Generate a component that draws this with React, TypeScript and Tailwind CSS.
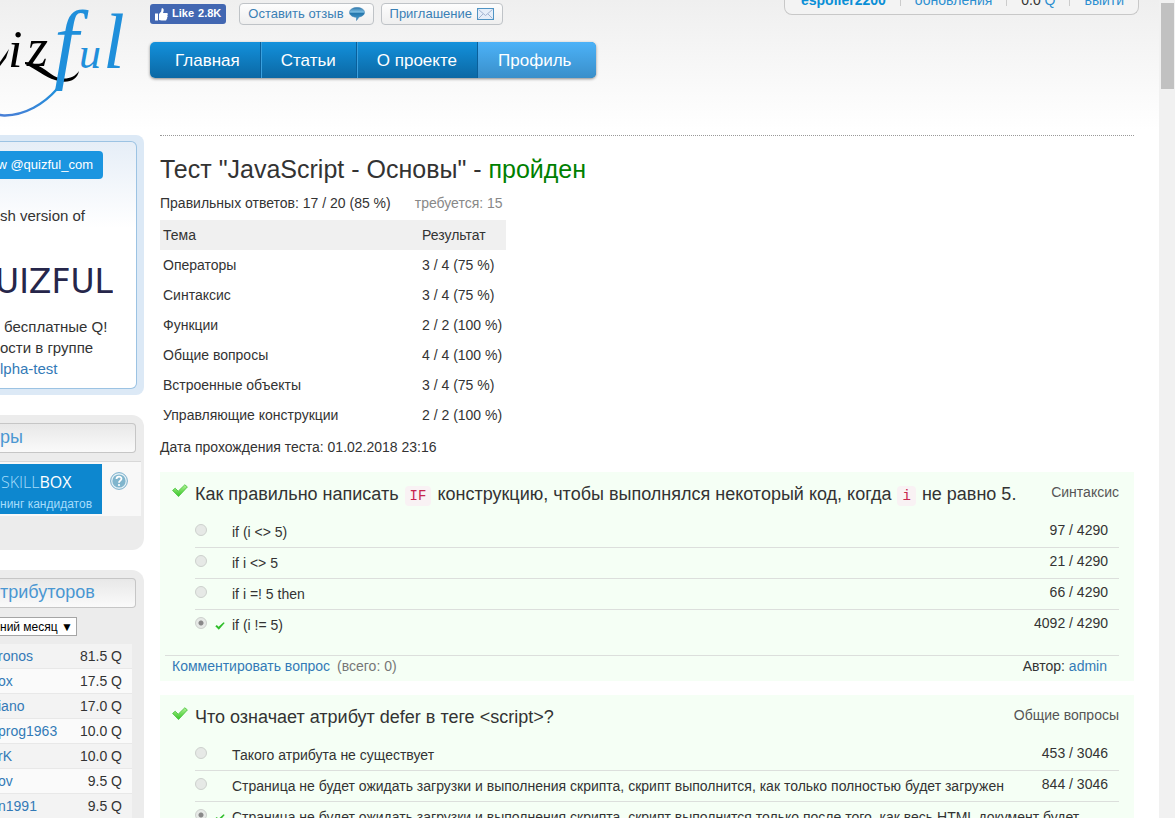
import type { ReactNode } from 'react';

const navItems = ['Главная', 'Статьи', 'О проекте'];

const topics = [
  ['Операторы', '3 / 4 (75 %)'],
  ['Синтаксис', '3 / 4 (75 %)'],
  ['Функции', '2 / 2 (100 %)'],
  ['Общие вопросы', '4 / 4 (100 %)'],
  ['Встроенные объекты', '3 / 4 (75 %)'],
  ['Управляющие конструкции', '2 / 2 (100 %)'],
];

const contributors = [
  ['ronos', '81.5 Q'],
  ['ox', '17.5 Q'],
  ['iano', '17.0 Q'],
  ['prog1963', '10.0 Q'],
  ['rK', '10.0 Q'],
  ['ov', '9.5 Q'],
  ['n1991', '9.5 Q'],
];

type Option = { text: string; count: string; chosen?: boolean };

function Logo() {
  return (
    <svg width="140" height="120" viewBox="0 0 140 120" role="img" aria-label="Quizful" fontFamily="Liberation Serif, serif" fontStyle="italic">
      <defs>
        <linearGradient id="ink" x1="0" y1="1" x2="1" y2="0">
          <stop offset="0" stopColor="#4a7fd6" />
          <stop offset="1" stopColor="#1f8fdb" />
        </linearGradient>
      </defs>
      <g fill="#000">
        <text x="8" y="67" fontSize="52">i</text>
        <text x="27" y="66" fontSize="54">z</text>
        <path d="M25 62C34 62 43 68 51 74C60 81 73 80 79 71C77 81 67 84 55 80C45 77 36 69 25 64Z" />
        <path d="M0 62L9 49L6 58L0 66Z" />
      </g>
      <g fill="#1f8fdb">
        <text x="54" y="72" fontSize="88">f</text>
        <text x="79" y="68" fontSize="44">u</text>
        <text x="103" y="68" fontSize="78">l</text>
      </g>
      <path d="M57 89C44 104 25 115 5 115.500C3 115.600 1 115.300 0 115" fill="none" stroke="url(#ink)" strokeWidth="2.400" strokeLinecap="round" />
    </svg>
  );
}

function BubbleIcon() {
  return (
    <svg width="16" height="14" viewBox="0 0 16 14" aria-hidden="true">
      <defs>
        <linearGradient id="bubble" x1="0" y1="0" x2="0" y2="1">
          <stop offset="0" stopColor="#2f78aa" />
          <stop offset="0.35" stopColor="#7dbfe4" />
          <stop offset="0.45" stopColor="#2577ac" />
          <stop offset="1" stopColor="#4ba0d2" />
        </linearGradient>
      </defs>
      <path d="M8 .5C12.200 .5 15.500 2.600 15.500 5.400C15.500 7.800 13 9.500 10 10L7.500 13.500V10.200C3.300 10 .5 8 .5 5.400C.5 2.600 3.800 .5 8 .5Z" fill="url(#bubble)" stroke="#3f83b3" strokeWidth=".6" />
    </svg>
  );
}

function EnvelopeIcon() {
  return (
    <svg width="17" height="12" viewBox="0 0 17 12" aria-hidden="true">
      <rect x=".5" y=".5" width="16" height="11" fill="#e6eef9" stroke="#4f94c4" />
      <path d="M1.500 1.500L8.500 7.500L15.500 1.500M1.500 10.500L6 6M15.500 10.500L11 6" fill="none" stroke="#a3b4d2" />
    </svg>
  );
}

function ThumbIcon() {
  return (
    <svg width="13" height="13" viewBox="0 0 13 13" fill="#fff" aria-hidden="true">
      <path d="M0 5.500H3V12.500H0ZM4 6L6.200 3.500L6.600 .7C6.800 0 8.700 0 8.700 2.200C8.700 3.300 8.300 4.300 8 5H11.500C13 5 13.200 6.700 12.200 7.200C13 7.700 12.800 9 12 9.200C12.500 9.800 12.200 10.800 11.500 11C11.800 12 11.200 12.500 10.200 12.500H6.500C5.500 12.500 5 12.200 4 12Z" />
    </svg>
  );
}

function BigCheck() {
  return (
    <svg width="16" height="14" viewBox="0 0 16 14" className="mt-3 shrink-0" aria-hidden="true">
      <defs>
        <linearGradient id="leaf" x1="0" y1="0" x2="0" y2="1">
          <stop offset="0" stopColor="#b4f29a" />
          <stop offset="0.5" stopColor="#6fdc58" />
          <stop offset="1" stopColor="#38c42c" />
        </linearGradient>
      </defs>
      <path d="M.6 6.400L3.200 4.200L6.200 7.200L12.800 .8L15.400 2.900L6.500 12.600Z" fill="url(#leaf)" stroke="#4fc644" strokeWidth=".9" strokeLinejoin="round" />
    </svg>
  );
}

function SmallCheck() {
  return (
    <svg width="10" height="8" viewBox="0 0 10 8" aria-hidden="true">
      <path d="M.3 4.200L1.800 3L3.600 4.800L8.600 .3L9.700 .9L3.800 7.800Z" fill="#2fbe2a" />
    </svg>
  );
}

function Code({ children }: { children: ReactNode }) {
  return <code className="mx-px rounded bg-[#f9f2f4] px-[5px] py-0.5 font-['Liberation_Mono',monospace] text-sm text-[#c7254e]">{children}</code>;
}

function Question({ id, title, topic, options }: { id: string; title: ReactNode; topic: string; options: Option[] }) {
  return (
    <section className="mb-3.5 bg-[#f5fff5] pr-[15px]">
      <div className="flex h-[45px] pl-3">
        <BigCheck />
        <h2 className="ml-[7px] flex-1 text-lg leading-[44px] whitespace-nowrap">{title}</h2>
        <span className="text-sm leading-[41px] text-[#555]">{topic}</span>
      </div>
      <div className="ml-[35px]">
        {options.map((o, i) => (
          <label key={o.text} className={`flex h-[31px] ${i < 3 ? 'border-b border-[#dcdfdc]' : ''}`}>
            <input
              type="radio"
              name={id}
              disabled
              defaultChecked={o.chosen}
              className="mt-[7px] size-3 appearance-none rounded-full border border-[#cdd1cd] bg-[#e6e9e6] checked:bg-[radial-gradient(circle,#888_0_2px,#e6e9e6_3px)]"
            />
            <span className="ml-2 flex h-[31px] w-[17px] items-center">{o.chosen && <SmallCheck />}</span>
            <span className="flex-1 leading-[31px] whitespace-nowrap">{o.text}</span>
            <span className="pr-[11px] leading-[27px]">{o.count}</span>
          </label>
        ))}
      </div>
      <footer className="mt-3.5 ml-[5px] flex h-[26px] justify-between border-t border-[#dcdfdc] pr-3 pl-[7px] leading-[21px]">
        <span className="text-[#777]">
          <a href="#comment" className="mr-[7px] text-[#337ab7]">Комментировать вопрос</a>(всего: 0)
        </span>
        <span>Автор: <a href="#admin" className="text-[#337ab7]">admin</a></span>
      </footer>
    </section>
  );
}

function Sidebar() {
  const heading = 'mr-2 h-[30px] rounded-r border border-l-0 border-[#c6c6c6] bg-linear-to-b from-[#e8e8e8] to-[#fafafa] text-lg leading-[27px] text-[#4a97d2]';
  return (
    <aside className="w-36 shrink-0 overflow-hidden">
      <section className="h-[260px] rounded-r-lg bg-[#dce9f6] py-1.5 pr-[7px]">
        <div className="h-full rounded-r-md border border-l-0 border-[#9cc3e3] bg-linear-to-b from-[#e6eef7] to-white to-35% pt-[9px]">
          <a href="#follow" className="flex h-7 w-[103px] justify-end rounded-r bg-[#1b95e0] pr-2.5 text-[13px] leading-7 font-medium whitespace-nowrap text-white">w @quizful_com</a>
          <p className="mt-[27px] text-[15px] leading-5">sh version of</p>
          <div className="mt-9 mb-3.5 flex h-10 w-[113px] justify-end overflow-hidden font-['DejaVu_Sans',sans-serif] text-[33px] leading-10 text-[#26264a]">UIZFUL</div>
          <p className="text-[15px] leading-[21px] whitespace-nowrap">
            <span className="pl-1">бесплатные Q!</span><br />ости в группе<br />
            <a href="#alpha" className="text-[#337ab7]">lpha-test</a>
          </p>
        </div>
      </section>
      <section className="mt-5 h-[135px] rounded-r-xl bg-[#ececec] pt-2">
        <h2 className={heading}>ры</h2>
        <div className="mt-2 mr-[3px] flex h-[55px] border-t border-[#d8d8d8] bg-[#f8f8f8] pt-0.5">
          <a href="#skillbox" className="block h-[50px] w-[102px] bg-[#0d87cf] pt-2 whitespace-nowrap text-[#a5dcfb]">
            <span className="block pl-px font-['Open_Sans',sans-serif] text-base leading-5"><span className="font-light">SKILL</span><span className="text-white">BOX</span></span>
            <span className="block text-[12px] leading-6">нинг кандидатов</span>
          </a>
          <svg width="18" height="18" viewBox="0 0 18 18" className="mt-2 ml-2" aria-hidden="true">
            <circle cx="9" cy="9" r="8.400" fill="#e5f1f6" stroke="#79aecb" />
            <circle cx="9" cy="9" r="6.600" fill="#80b5cd" />
            <path d="M6.500 7C6.500 3.800 11.500 3.800 11.500 6.800C11.500 8.800 9 8.500 9 10.700" fill="none" stroke="#fff" strokeWidth="1.800" />
            <circle cx="9" cy="13" r="1.100" fill="#fff" />
          </svg>
        </div>
      </section>
      <section className="mt-5 rounded-r-xl bg-[#ececec] pt-2 pb-6">
        <h2 className={heading}>трибуторов</h2>
        <select aria-label="Период" className="mt-[9px] block h-[19px] w-[77px] appearance-none border border-l-0 border-[#a5a5a5] bg-white text-[12px] leading-4 text-black">
          <option>ний месяц ▼</option>
        </select>
        <ul className="mt-2 mr-3">
          {contributors.map(([name, score]) => (
            <li key={name} className="flex h-[25px] justify-between border-b border-[#e8e8e8] pr-2.5 leading-6 odd:bg-[#f3f3f3] even:bg-[#fafafa]">
              <a href={`#${name}`} className="-ml-0.5 text-[#337ab7]">{name}</a>
              <span>{score}</span>
            </li>
          ))}
        </ul>
      </section>
    </aside>
  );
}

export default function App() {
  const pill = 'flex h-[22px] items-center gap-[5px] rounded border border-[#bfc3c7] bg-linear-to-b from-[#fdfdfd] to-[#efefef] px-2 text-[13px] text-[#3a80b5]';
  return (
    <div className="flex h-screen overflow-hidden bg-white font-['Liberation_Sans',Arial,sans-serif] text-sm text-[#333]">
      <div className="min-w-0 flex-1 bg-linear-to-b from-[#efefef] to-white to-[130px]">
        <header className="flex h-[135px]">
          <a href="#home" className="w-[150px] shrink-0"><Logo /></a>
          <div className="flex-1 pt-[3px]">
            <div className="flex items-center whitespace-nowrap">
              <button className="flex h-5 items-center gap-1 rounded-[3px] bg-[#4267b2] px-[5px] text-[11px] font-bold text-white">
                <ThumbIcon />Like <span>2.8K</span>
              </button>
              <button className={`${pill} ml-[13px]`}>Оставить отзыв<BubbleIcon /></button>
              <button className={`${pill} ml-[7px]`}>Приглашение<EnvelopeIcon /></button>
            </div>
            <nav className="mt-[17px] flex h-9 w-fit overflow-hidden rounded-[5px] bg-linear-to-b from-[#1391dc] to-[#0b68a4] text-[17px] leading-[37px] whitespace-nowrap text-white shadow-[0_1px_3px_#888]">
              {navItems.map((n) => (
                <a key={n} href={`#${n}`} className="border-r border-[#0a5f9a] px-5 shadow-[inset_1px_0_#3aa0de] first:pl-[25px] first:shadow-none">{n}</a>
              ))}
              <a href="#profile" className="bg-linear-to-b from-[#4cb2f8] to-[#3a8fca] pr-[25px] pl-5">Профиль</a>
            </nav>
          </div>
          <div className="mt-[-15px] mr-5 flex h-[30px] w-[355px] items-center justify-between rounded-b-lg border border-t-0 border-[#c8c8c8] bg-[#f3f3f3] pr-3.5 pl-4 text-sm text-[#2d8fd0]">
            <a href="#user" className="font-bold text-[#0b8fd6]">espolier2200</a>
            <span className="h-[13px] w-px bg-[#ccc]" />
            <a href="#updates">обновления</a>
            <span className="h-[13px] w-px bg-[#ccc]" />
            <span className="text-[#333]">0.0 <span className="text-[#2d8fd0]">Q</span></span>
            <span className="h-[13px] w-px bg-[#ccc]" />
            <a href="#logout">выйти</a>
          </div>
        </header>
        <div className="flex">
          <Sidebar />
          <main className="ml-4 mr-[25px] min-w-0 flex-1 border-t border-dotted border-[#999]">
            <h1 className="mt-[15px] text-[25px] leading-9">Тест "JavaScript - Основы" - <span className="text-[#008000]">пройден</span></h1>
            <p className="mt-1.5 leading-5">Правильных ответов: 17 / 20 (85 %)<span className="ml-6 text-[#888]">требуется: 15</span></p>
            <table className="mt-[7px] w-[346px] text-left">
              <thead>
                <tr className="h-[30px] bg-[#f0f0f0]">
                  <th className="w-[259px] pl-[3px] font-normal">Тема</th>
                  <th className="pl-[3px] font-normal">Результат</th>
                </tr>
              </thead>
              <tbody>
                {topics.map(([name, result]) => (
                  <tr key={name} className="h-[30px]">
                    <td className="pl-[3px]">{name}</td>
                    <td className="pl-[3px]">{result}</td>
                  </tr>
                ))}
              </tbody>
            </table>
            <p className="mt-[7px] mb-[15px] leading-5">Дата прохождения теста: 01.02.2018 23:16</p>
            <Question
              id="q1"
              title={<>Как правильно написать <Code>IF</Code> конструкцию, чтобы выполнялся некоторый код, когда <Code>i</Code> не равно 5.</>}
              topic="Синтаксис"
              options={[
                { text: 'if (i <> 5)', count: '97 / 4290' },
                { text: 'if i <> 5', count: '21 / 4290' },
                { text: 'if i =! 5 then', count: '66 / 4290' },
                { text: 'if (i != 5)', count: '4092 / 4290', chosen: true },
              ]}
            />
            <Question
              id="q2"
              title="Что означает атрибут defer в теге <script>?"
              topic="Общие вопросы"
              options={[
                { text: 'Такого атрибута не существует', count: '453 / 3046' },
                { text: 'Страница не будет ожидать загрузки и выполнения скрипта, скрипт выполнится, как только полностью будет загружен', count: '844 / 3046' },
                { text: 'Страница не будет ожидать загрузки и выполнения скрипта, скрипт выполнится только после того, как весь HTML документ будет', count: '', chosen: true },
              ]}
            />
          </main>
        </div>
      </div>
      <div className="w-4 shrink-0 bg-[#f1f1f1] pt-[3px] pl-0.5">
        <div className="h-[86px] w-[13px] bg-[#c1c1c1]" />
      </div>
    </div>
  );
}
